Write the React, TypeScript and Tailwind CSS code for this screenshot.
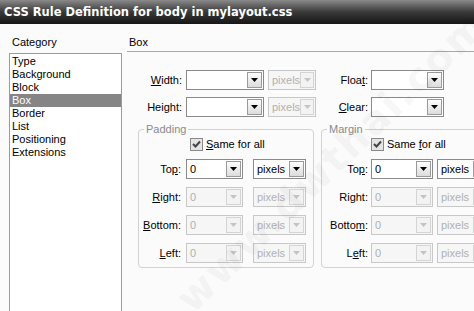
import React from 'react';

const ui = "font-['Liberation_Sans',Tahoma,Arial,sans-serif] text-[11px] leading-[13px]";

function Arrow({ disabled }: { disabled?: boolean }) {
  return (
    <span
      className={
        disabled
          ? 'flex h-[16px] w-[15px] items-center justify-center border border-[#d4d4d4] bg-[#f3f3f3]'
          : 'flex h-[16px] w-[15px] items-center justify-center border border-[#9a9a9a] bg-linear-to-b from-[#fdfdfd] to-[#dcdcdc]'
      }
    >
      <svg width="7" height="4" viewBox="0 0 7 4">
        <path d="M0 0h7L3.5 4z" fill={disabled ? '#c4c4c4' : '#000'} />
      </svg>
    </span>
  );
}

function Combo({ width, value = '', disabled }: { width: string; value?: string; disabled?: boolean }) {
  return (
    <div
      className={`flex h-[20px] shrink-0 items-center justify-between border pl-[3px] pr-[1px] ${width} ${
        disabled ? 'border-[#c8c8c8] bg-[#f6f6f6] text-[#b0b0b0]' : 'border-[#8a8a8a] bg-white text-black'
      }`}
    >
      <span>{value}</span>
      <Arrow disabled={disabled} />
    </div>
  );
}

function Label({ children, width }: { children: React.ReactNode; width: string }) {
  return <span className={`shrink-0 text-right ${width}`}>{children}</span>;
}

const u = (s: string) => <span className="underline underline-offset-[1px]">{s}</span>;

function Check({ label }: { label: React.ReactNode }) {
  return (
    <div className="flex items-center gap-[3px]">
      <span className="flex h-[13px] w-[13px] items-center justify-center border border-[#8a8a8a] bg-[#e4e4e4]">
        <svg width="9" height="9" viewBox="0 0 9 9">
          <path d="M1 4l2.5 2.5L8 1.5" stroke="#444" strokeWidth="2" fill="none" />
        </svg>
      </span>
      <span>{label}</span>
    </div>
  );
}

type Side = { label: React.ReactNode; enabled?: boolean };

function BoxGroup({
  title,
  same,
  sides,
  labelW,
  inputW,
  unitW,
  gap,
  checkPad,
  className,
}: {
  title: string;
  same: React.ReactNode;
  sides: Side[];
  labelW: string;
  inputW: string;
  unitW: string;
  gap: string;
  checkPad: string;
  className: string;
}) {
  return (
    <fieldset className={`rounded-[4px] border border-[#d2d2d2] pb-[4px] ${className}`}>
      <legend className="ml-[5px] px-[2px] text-[#8a8a8a]">{title}</legend>
      <div className={`mt-[2px] ${checkPad}`}>
        <Check label={same} />
      </div>
      <div className="mt-[8px] flex flex-col gap-[8px]">
        {sides.map((s, i) => (
          <div key={i} className="flex items-center">
            <Label width={labelW}>{s.label}</Label>
            <div className={`flex ${gap}`}>
              <Combo width={inputW} value="0" disabled={!s.enabled} />
              <Combo width={unitW} value="pixels" disabled={!s.enabled} />
            </div>
          </div>
        ))}
      </div>
    </fieldset>
  );
}

export default function App() {
  const categories = ['Type', 'Background', 'Block', 'Box', 'Border', 'List', 'Positioning', 'Extensions'];

  return (
    <div className={`relative h-[311px] w-[474px] overflow-hidden bg-[#fbfbfb] text-black ${ui}`}>
      <div className="flex h-[24px] items-center bg-linear-to-b from-[#8a8a8a] via-[#3a3a3a] to-[#161616] pl-[4px] font-['DejaVu_Sans',Verdana,sans-serif] text-[11.5px] font-bold text-white">
        CSS Rule Definition for body in mylayout.css
      </div>

      <div className="flex">
        <div className="w-[127px] shrink-0 pl-[9px]">
          <div className="pl-[3px] pt-[12px]">Category</div>
          <ul className="mt-[4px] h-[260px] w-[113px] border border-[#9c9c9c] bg-white py-[1px]">
            {categories.map((c) => (
              <li
                key={c}
                className={c === 'Box' ? 'bg-[#858585] pl-[2px] text-white' : 'pl-[2px]'}
              >
                {c}
              </li>
            ))}
          </ul>
        </div>

        <div className="flex-1">
          <div className="h-[28px] border-b border-[#a8a8a8] pl-[2px] pt-[12px]">Box</div>

          <div className="mt-[18px] flex flex-col gap-[7px]">
            <div className="flex items-center">
              <Label width="w-[55px]">{u('W')}idth:</Label>
              <div className="ml-[4px] flex gap-[4px]">
                <Combo width="w-[78px]" />
                <Combo width="w-[48px]" value="pixels" disabled />
              </div>
              <Label width="w-[52px]">
                Floa{u('t')}:
              </Label>
              <div className="ml-[3px]">
                <Combo width="w-[73px]" />
              </div>
            </div>
            <div className="flex items-center">
              <Label width="w-[55px]">
                Hei{u('g')}ht:
              </Label>
              <div className="ml-[4px] flex gap-[4px]">
                <Combo width="w-[78px]" />
                <Combo width="w-[48px]" value="pixels" disabled />
              </div>
              <Label width="w-[52px]">{u('C')}lear:</Label>
              <div className="ml-[3px]">
                <Combo width="w-[73px]" />
              </div>
            </div>
          </div>

          <div className="mt-[6px] flex gap-[7px] pl-[11px]">
            <BoxGroup
              title="Padding"
              same={<>{u('S')}ame for all</>}
              className="w-[176px] shrink-0"
              checkPad="pl-[51px]"
              labelW="w-[42px] mr-[5px]"
              inputW="w-[57px]"
              unitW="w-[53px]"
              gap="gap-[10px]"
              sides={[
                { label: <>To{u('p')}:</>, enabled: true },
                { label: <>{u('R')}ight:</> },
                { label: <>{u('B')}ottom:</> },
                { label: <>{u('L')}eft:</> },
              ]}
            />
            <BoxGroup
              title="Margin"
              same={<>Same {u('f')}or all</>}
              className="w-[170px] shrink-0"
              checkPad="pl-[49px]"
              labelW="w-[46px] mr-[3px]"
              inputW="w-[62px]"
              unitW="w-[53px]"
              gap="gap-[4px]"
              sides={[
                { label: <>To{u('p')}:</>, enabled: true },
                { label: <>Right:</> },
                { label: <>Botto{u('m')}:</> },
                { label: <>L{u('e')}ft:</> },
              ]}
            />
          </div>
        </div>
      </div>

      <div className="pointer-events-none absolute left-[125px] top-[155px] -rotate-[44deg] font-['DejaVu_Sans',Verdana,sans-serif] text-[40px] font-bold tracking-[2px] text-black/[0.05]">
        www.dwthai.com
      </div>
    </div>
  );
}
